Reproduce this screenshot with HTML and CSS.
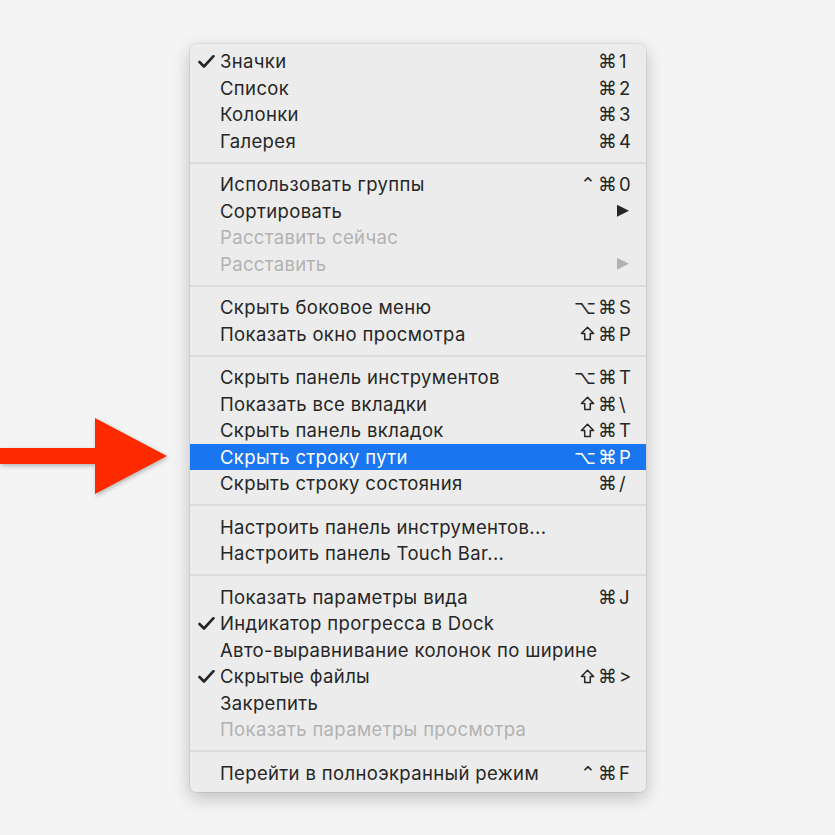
FILE: index.html
```html
<!DOCTYPE html>
<html lang="ru">
<head>
    <meta charset="UTF-8">
    <title>Вид</title>
    <link rel="stylesheet" href="styles.css">
</head>
<body>
<div class="stage">
    <div class="pointer">
        <svg width="168" height="80" viewBox="0 0 168 80">
            <polygon points="0,30 95,30 95,0 167,38 95,76 95,46 0,46" fill="#ff2a00"/>
        </svg>
    </div>
    <div class="menu">
        <ul class="group">
            <li class="item checked"><span class="label">Значки</span><span class="mods">⌘</span><span class="key">1</span></li>
            <li class="item"><span class="label">Список</span><span class="mods">⌘</span><span class="key">2</span></li>
            <li class="item"><span class="label">Колонки</span><span class="mods">⌘</span><span class="key">3</span></li>
            <li class="item"><span class="label">Галерея</span><span class="mods">⌘</span><span class="key">4</span></li>
        </ul>
        <ul class="group">
            <li class="item"><span class="label">Использовать группы</span><span class="mods">⌃⌘</span><span class="key">0</span></li>
            <li class="item"><span class="label">Сортировать</span><span class="sub"></span></li>
            <li class="item off"><span class="label">Расставить сейчас</span></li>
            <li class="item off"><span class="label">Расставить</span><span class="sub"></span></li>
        </ul>
        <ul class="group">
            <li class="item"><span class="label">Скрыть боковое меню</span><span class="mods">⌥⌘</span><span class="key">S</span></li>
            <li class="item"><span class="label">Показать окно просмотра</span><span class="mods"><i class="shift"></i>⌘</span><span class="key">P</span></li>
        </ul>
        <ul class="group">
            <li class="item"><span class="label">Скрыть панель инструментов</span><span class="mods">⌥⌘</span><span class="key">T</span></li>
            <li class="item"><span class="label">Показать все вкладки</span><span class="mods"><i class="shift"></i>⌘</span><span class="key">\</span></li>
            <li class="item"><span class="label">Скрыть панель вкладок</span><span class="mods"><i class="shift"></i>⌘</span><span class="key">T</span></li>
            <li class="item current"><span class="label">Скрыть строку пути</span><span class="mods">⌥⌘</span><span class="key">P</span></li>
            <li class="item"><span class="label">Скрыть строку состояния</span><span class="mods">⌘</span><span class="key">/</span></li>
        </ul>
        <ul class="group">
            <li class="item"><span class="label">Настроить панель инструментов...</span></li>
            <li class="item"><span class="label">Настроить панель Touch Bar...</span></li>
        </ul>
        <ul class="group">
            <li class="item"><span class="label">Показать параметры вида</span><span class="mods">⌘</span><span class="key">J</span></li>
            <li class="item checked"><span class="label">Индикатор прогресса в Dock</span></li>
            <li class="item"><span class="label">Авто-выравнивание колонок по ширине</span></li>
            <li class="item checked"><span class="label">Скрытые файлы</span><span class="mods"><i class="shift"></i>⌘</span><span class="key">&gt;</span></li>
            <li class="item"><span class="label">Закрепить</span></li>
            <li class="item off"><span class="label">Показать параметры просмотра</span></li>
        </ul>
        <ul class="group">
            <li class="item"><span class="label">Перейти в полноэкранный режим</span><span class="mods">⌃⌘</span><span class="key">F</span></li>
        </ul>
    </div>
</div>
</body>
</html>
```

FILE: styles.css
```css
* {
    padding: 0;
    margin: 0;
    list-style: none;
    box-sizing: border-box;
}

body {
    background: #f4f4f4;
    font-family: Inter, "Liberation Sans", "DejaVu Sans", sans-serif;
    color: #262626;
}

.stage {
    width: 835px;
    height: 835px;
    display: flex;
    align-items: flex-start;
    padding-top: 44px;
}

.pointer {
    width: 190px;
    margin-top: 374px;
}

.pointer svg {
    display: block;
    filter: drop-shadow(1px 2px 2px rgba(0, 0, 0, 0.25));
}

.menu {
    width: 456px;
    background: #ececec;
    border-radius: 6px;
    padding: 4px 0 6px;
    box-shadow: 0 0 0 1px rgba(0, 0, 0, 0.06), 0 6px 18px rgba(0, 0, 0, 0.22);
}

.group + .group {
    margin-top: 17px;
    position: relative;
}

.group + .group::before {
    content: "";
    position: absolute;
    left: 0;
    right: 0;
    top: -9.5px;
    height: 2px;
    background: #dcdcdc;
}

.item {
    height: 26.5px;
    display: flex;
    align-items: center;
    padding: 0 14px 0 30px;
    font-size: 18.5px;
    letter-spacing: 0.35px;
    position: relative;
}

.label {
    flex: 1;
    white-space: nowrap;
}

.mods {
    display: flex;
    align-items: center;
    font-family: "DejaVu Sans", sans-serif;
    font-size: 19px;
    letter-spacing: 2px;
}

.shift {
    width: 15px;
    height: 15px;
    margin-right: 3px;
    background: no-repeat center / contain url("data:image/svg+xml;utf8,<svg xmlns='http://www.w3.org/2000/svg' viewBox='0 0 15 15'><path d='M7.5 1.3 L13.6 7.6 H10.3 V13.6 H4.7 V7.6 H1.4 Z' fill='none' stroke='%23262626' stroke-width='1.5' stroke-linejoin='round'/></svg>");
}

.key {
    width: 13px;
}

.sub {
    width: 12px;
    height: 12px;
    margin-right: 3px;
    background: #262626;
    clip-path: polygon(0 0, 100% 50%, 0 100%);
}

.item.off {
    color: #b2b2b2;
}

.item.off .sub {
    background: #b2b2b2;
}

.item.checked::before {
    content: "";
    position: absolute;
    left: 8px;
    top: 7px;
    width: 17px;
    height: 13px;
    background: no-repeat center / contain url("data:image/svg+xml;utf8,<svg xmlns='http://www.w3.org/2000/svg' viewBox='0 0 17 13'><polyline points='1.5,7 6,11.5 15.5,1.2' fill='none' stroke='%23262626' stroke-width='2.6' stroke-linecap='round' stroke-linejoin='round'/></svg>");
}

.item.current {
    background: #1a75f0;
    color: #fff;
}
```
